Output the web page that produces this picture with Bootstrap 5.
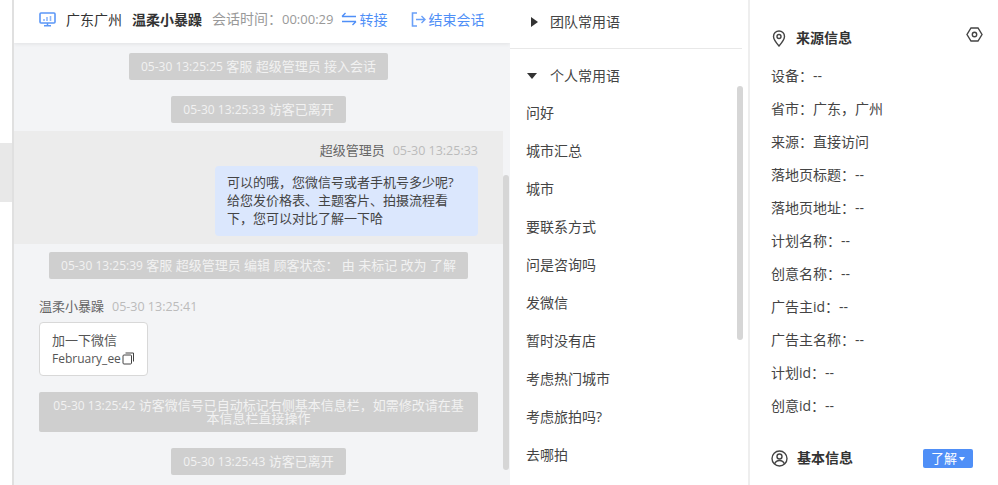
<!DOCTYPE html>
<html lang="zh">
<head>
<meta charset="utf-8">
<link href="https://cdn.jsdelivr.net/npm/bootstrap@5.3.0/dist/css/bootstrap.min.css" rel="stylesheet">
<style>
html,body{height:485px;overflow:hidden;background:#fff}
body{font-family:"Open Sans","Noto Sans CJK SC",sans-serif;font-size:14px;color:#444}
.shell{height:485px;width:998px}
.rail{width:14px;border-right:2px solid #e0e0e0;padding-top:143px;flex:none}
.rail-block{height:59px;background:#e8e8e8;width:12px}
.chat{width:496px;flex:none;background:#f3f4f6;position:relative;overflow:hidden;font-size:13px}
.chat-head{height:43px;background:#fff;padding:0 0 5px 25px;box-shadow:0 1px 4px rgba(0,0,0,.08);color:#333;white-space:nowrap;font-size:14px}
.head-ico{margin-right:10px}
.head-name{font-weight:700;margin-left:10px}
.head-time{color:#999;margin-left:10px}
.head-time .num{font-size:13px}
.act-a{margin-left:8px}
.act-b{margin-left:24px}
.act-a svg,.act-b svg{margin-right:2px}
.chat-body{padding-top:10px;width:489px}
.sys{background:#cfcfcf;color:#f2f2f2;border-radius:2px;line-height:13px;text-align:center;padding:7px 12px;margin:0 auto 16px;width:max-content;max-width:439px}
.sys .num{font-size:12px}
.sys.lone{height:27px}
.sys.tight{margin-bottom:8px}
.sys.wide{width:439px;margin-left:25px;height:40px}
.own{background:#ececec;padding:10px 25px 8px;margin-bottom:8px;height:113px}
.who{color:#666;line-height:18px}
.stamp{color:#bbb;margin-left:8px;font-size:12.5px}
.bubble{background:#dbe7fd;border-radius:4px;width:263px;height:70px;padding:7px 12px 5px;line-height:18px;color:#444;margin:6px 0 0 auto}
.visitor{padding:0 25px;margin-top:18px}
.wechat{width:109px;height:54px;background:#fff;border:1px solid #d8d8d8;border-radius:4px;margin:6px 0 16px;padding:8px 12px;line-height:18px;color:#555;white-space:nowrap}
.wechat .num{font-size:12px}
.wechat svg{vertical-align:-2px;margin-left:1px}
.link-act{color:#4f8ff7}
.bar{position:absolute;width:6px;background:#d6d6d6;border-radius:3px}
.bar-a{left:489px;top:175px;height:295px}
.bar-b{left:227px;top:86px;height:254px}
.phrases{width:240px;flex:none;border-right:2px solid #eee;position:relative;overflow:hidden}
.phr-head{height:49px;margin-right:6px;border-bottom:1px solid #e8e8e8;padding:0 0 5px 21px}
.phr-head2{height:53px;padding-left:17px}
.phr-list{padding-left:16px}
.phr-list div{height:38px;line-height:22px}
.tri-r{width:0;height:0;border-left:7px solid #333;border-top:5px solid transparent;border-bottom:5px solid transparent;margin-right:12px}
.tri-d{width:0;height:0;border-top:6px solid #333;border-left:5.5px solid transparent;border-right:5.5px solid transparent;margin-right:13px}
.info{flex:1;padding:25px 25px 0 21px;position:relative;min-width:0}
.info-title{font-weight:700;color:#333;line-height:26px}
.info-title svg{margin-right:9px;flex:none}
.info-top{margin-bottom:15px}
.info-row{height:33px;line-height:20px}
.info-bottom{margin-top:16px}
.gear{position:absolute;left:216px;top:27px}
.tag{background:#4f8ff7;color:#fff;border-radius:2px;width:50px;height:19px;line-height:19px;font-weight:400;font-size:13px;text-align:center}
.tag i{display:inline-block;width:0;height:0;border-top:4px solid #fff;border-left:3.5px solid transparent;border-right:3.5px solid transparent;vertical-align:2px;margin-left:2px}
</style>
</head>
<body>
<div class="shell d-flex">
  <div class="rail"><div class="rail-block"></div></div>
  <div class="chat">
    <div class="chat-head d-flex align-items-center">
      <svg class="head-ico" width="17" height="15" viewBox="0 0 17 15" fill="none"><rect x="1" y="1" width="15" height="10" rx="1" stroke="#5b97f7" stroke-width="1.6"/><path d="M5 13.8h7M8.5 11v3" stroke="#5b97f7" stroke-width="1.5"/><path d="M5 9V7M8 9V5M11.500 9V4" stroke="#8db6fa" stroke-width="1.6"/></svg>
      <span>广东广州</span><span class="head-name">温柔小暴躁</span>
      <span class="head-time">会话时间：<span class="num">00:00:29</span></span>
      <span class="link-act act-a d-flex align-items-center"><svg width="16" height="14" viewBox="0 0 16 14" fill="none"><path d="M1 4.500h14M4.500 1 1 4.500M15 9.500H1M11.500 13 15 9.500" stroke="#4f8ff7" stroke-width="1.4"/></svg>转接</span>
      <span class="link-act act-b d-flex align-items-center"><svg width="15" height="15" viewBox="0 0 15 15" fill="none"><path d="M6 1H1.500v13H6" stroke="#6aa0f8" stroke-width="1.6"/><path d="M5 7.500h9M10.500 4 14 7.500 10.500 11" stroke="#6aa0f8" stroke-width="1.4"/></svg>结束会话</span>
    </div>
    <div class="chat-body">
      <div class="sys lone"><span class="num">05-30 13:25:25</span> 客服 超级管理员 接入会话</div>
      <div class="sys lone tight"><span class="num">05-30 13:25:33</span> 访客已离开</div>
      <div class="own">
        <div class="who text-end">超级管理员<span class="stamp">05-30 13:25:33</span></div>
        <div class="bubble">可以的哦，您微信号或者手机号多少呢?给您发价格表、主题客片、拍摄流程看下，您可以对比了解一下哈</div>
      </div>
      <div class="sys lone"><span class="num">05-30 13:25:39</span> 客服 超级管理员 编辑 顾客状态： 由 未标记 改为 了解</div>
      <div class="visitor">
        <div class="who">温柔小暴躁<span class="stamp">05-30 13:25:41</span></div>
        <div class="wechat">加一下微信<br><span class="num">February_ee</span><svg width="13" height="13" viewBox="0 0 13 13" fill="none"><rect x="1" y="3" width="8.500" height="9" rx="1" stroke="#444"/><path d="M3.500 1h8v8.500" stroke="#444"/></svg></div>
      </div>
      <div class="sys wide"><span class="num">05-30 13:25:42</span> 访客微信号已自动标记右侧基本信息栏，如需修改请在基本信息栏直接操作</div>
      <div class="sys lone"><span class="num">05-30 13:25:43</span> 访客已离开</div>
    </div>
    <div class="bar bar-a"></div>
  </div>
  <div class="phrases">
    <div class="phr-head d-flex align-items-center"><span class="tri-r"></span>团队常用语</div>
    <div class="phr-head2 d-flex align-items-center"><span class="tri-d"></span>个人常用语</div>
    <div class="phr-list">
      <div>问好</div><div>城市汇总</div><div>城市</div><div>要联系方式</div><div>问是咨询吗</div><div>发微信</div><div>暂时没有店</div><div>考虑热门城市</div><div>考虑旅拍吗?</div><div>去哪拍</div>
    </div>
    <div class="bar bar-b"></div>
  </div>
  <div class="info">
    <div class="info-title info-top d-flex align-items-center"><svg width="16" height="17" viewBox="0 0 16 17" fill="none"><path d="M8 16C4.500 12 2.500 9.500 2.500 6.500a5.500 5.500 0 0 1 11 0C13.500 9.500 11.500 12 8 16Z" stroke="#444" stroke-width="1.400"/><circle cx="8" cy="6.500" r="2" stroke="#444" stroke-width="1.400"/></svg>来源信息</div>
    <svg class="gear" width="17" height="15" viewBox="0 0 17 15" fill="none"><path d="M5 1h7l4 6.500-4 6.500H5L1 7.500Z" stroke="#444" stroke-width="1.400"/><circle cx="8.500" cy="7.500" r="2.200" stroke="#444" stroke-width="1.400"/></svg>
    <div class="info-row">设备：--</div>
    <div class="info-row">省市：广东，广州</div>
    <div class="info-row">来源：直接访问</div>
    <div class="info-row">落地页标题：--</div>
    <div class="info-row">落地页地址：--</div>
    <div class="info-row">计划名称：--</div>
    <div class="info-row">创意名称：--</div>
    <div class="info-row">广告主id：--</div>
    <div class="info-row">广告主名称：--</div>
    <div class="info-row">计划id：--</div>
    <div class="info-row">创意id：--</div>
    <div class="info-title info-bottom d-flex align-items-center justify-content-between">
      <span class="d-flex align-items-center"><svg width="17" height="17" viewBox="0 0 17 17" fill="none"><circle cx="8.500" cy="8.500" r="7.500" stroke="#444" stroke-width="1.400"/><circle cx="8.500" cy="6.500" r="2.500" stroke="#444" stroke-width="1.400"/><path d="M3.500 14c1-2.500 3-3.500 5-3.500s4 1 5 3.500" stroke="#444" stroke-width="1.400"/></svg>基本信息</span>
      <span class="tag">了解<i></i></span>
    </div>
  </div>
</div>
<script src="https://cdn.jsdelivr.net/npm/bootstrap@5.3.0/dist/js/bootstrap.bundle.min.js"></script>
</body>
</html>
